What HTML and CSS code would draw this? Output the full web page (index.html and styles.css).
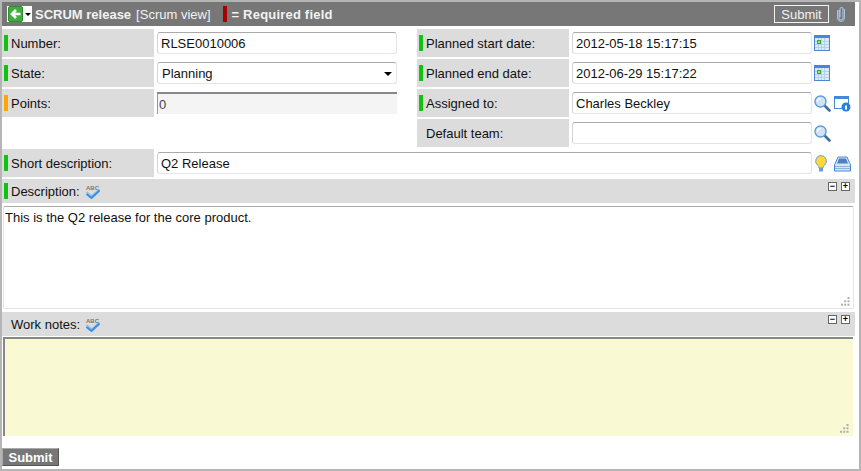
FILE: index.html
```html
<html>

<head>
  <meta http-equiv="Content-Type" content="text/html; charset=utf-8" />
  <title>SCRUM release</title>
  <link rel="stylesheet" href="styles.css">
</head>

<body>
  <svg class="defs" width="0" height="0">
    <symbol id="cal" viewBox="0 0 16 16">
      <rect x="0.5" y="0.5" width="15" height="15" fill="#dcebfa" stroke="#4a86d8" />
      <rect x="1" y="1" width="14" height="2" fill="#4a86d8" />
      <path d="M1 6.500h14M1 9.500h14M1 12.500h14M4.500 3v12M7.500 3v12M10.500 3v12" stroke="#b4d0ee" fill="none" />
      <rect x="3" y="5" width="4" height="4" fill="#2fae2f" />
      <rect x="4.200" y="6.200" width="1.600" height="1.600" fill="#e8f5e0" />
    </symbol>
    <symbol id="search" viewBox="0 0 17 17">
      <path d="M10.500 10.500l5 5" stroke="#3f6f9f" stroke-width="2.600" stroke-linecap="round" />
      <circle cx="6.500" cy="6.500" r="5.500" fill="#cfe4f8" stroke="#5f9bd6" stroke-width="1.400" />
      <path d="M3.500 6.500a3 3 0 0 1 3-3" stroke="#fff" stroke-width="1.200" fill="none" />
    </symbol>
    <symbol id="grip" viewBox="0 0 9 9">
      <path d="M6.500 0h2v2h-2zM3.200 3.300h2v2h-2zM6.500 3.300h2v2h-2zM0 6.700h2v2H0zM3.200 6.700h2v2h-2zM6.500 6.700h2v2h-2z" fill="#b0b0a8" />
    </symbol>
  </svg>

  <div class="page">
    <div class="titlebar">
      <span class="nav">
        <svg class="back" width="15" height="16" viewBox="0 0 15 16">
          <rect x="0.500" y="0.500" width="14" height="15" rx="1.500" fill="#3fae3f" stroke="#2e8f2e" />
          <path d="M12.500 8H4.500M8 4L4 8l4 4" stroke="#fff" stroke-width="2.600" fill="none" />
        </svg>
        <span class="caret"></span>
      </span>
      <b class="title">SCRUM release</b>
      <span class="view">[Scrum view]</span>
      <span class="legend"></span>
      <b class="title req">= Required field</b>
      <span class="spacer"></span>
      <button class="top-submit">Submit</button>
      <svg class="clip" width="10" height="16" viewBox="0 0 10 16">
        <path d="M3 4v8a2 2 0 0 0 4 0V3a1.500 1.500 0 0 0-3 0v8" stroke="#a9c0da" stroke-width="1.200" fill="none" />
        <path d="M1.500 4v8a3.500 3.500 0 0 0 7 0V3" stroke="#a9c0da" fill="none" />
      </svg>
    </div>

    <div class="fields">
      <div class="col">
        <div class="row">
          <label class="lab"><i class="mark ok"></i><span>Number:</span></label>
          <input class="box" value="RLSE0010006">
        </div>
        <div class="row">
          <label class="lab"><i class="mark ok"></i><span>State:</span></label>
          <div class="box sel">Planning</div>
        </div>
        <div class="row">
          <label class="lab"><i class="mark warn"></i><span>Points:</span></label>
          <input class="box ro" value="0" readonly>
        </div>
      </div>
      <div class="col">
        <div class="row">
          <label class="lab"><i class="mark ok"></i><span>Planned start date:</span></label>
          <input class="box" value="2012-05-18 15:17:15">
          <svg class="ico cal"><use href="#cal" /></svg>
        </div>
        <div class="row">
          <label class="lab"><i class="mark ok"></i><span>Planned end date:</span></label>
          <input class="box" value="2012-06-29 15:17:22">
          <svg class="ico cal"><use href="#cal" /></svg>
        </div>
        <div class="row">
          <label class="lab"><i class="mark ok"></i><span>Assigned to:</span></label>
          <input class="box" value="Charles Beckley">
          <svg class="ico"><use href="#search" /></svg>
          <svg class="ico info" viewBox="0 0 17 17">
            <rect x="0.500" y="1.500" width="14" height="12" fill="#fff" stroke="#4a86d8" />
            <rect x="1" y="2" width="13" height="2" fill="#4a86d8" />
            <circle cx="12" cy="12" r="4.500" fill="#2a7fd8" />
            <rect x="11" y="10.500" width="2" height="4" fill="#fff" />
          </svg>
        </div>
        <div class="row">
          <label class="lab"><i class="mark"></i><span>Default team:</span></label>
          <input class="box" value="">
          <svg class="ico"><use href="#search" /></svg>
        </div>
      </div>
    </div>

    <div class="row wide">
      <label class="lab"><i class="mark ok"></i><span>Short description:</span></label>
      <input class="box" value="Q2 Release">
      <svg class="ico bulb" viewBox="0 0 12 17">
        <path d="M6 .5a5.500 5.500 0 0 0-3.300 9.800c.8.700 1.300 1.500 1.300 2.700h4c0-1.200.5-2 1.300-2.700A5.500 5.500 0 0 0 6 .5z" fill="#ffd83a" stroke="#6b9fd8" />
        <rect x="4" y="13" width="4" height="3.500" fill="#6b9fd8" />
      </svg>
      <svg class="ico tray" viewBox="0 0 17 17">
        <path d="M4 2h9l3.500 8v6H.5v-6z" fill="#d6e6f6" stroke="#4a86d8" />
        <path d="M5 3.500h7l2 5H3z" fill="#4a7fc0" />
        <path d="M1 11.500h15M1 13.500h15" stroke="#8fb4dc" />
      </svg>
    </div>

    <div class="bar">
      <i class="mark ok"></i><span>Description:</span>
      <svg class="ico spell" viewBox="0 0 17 15">
        <text x="1" y="5.500" font-family="Liberation Sans" font-size="6" font-weight="bold" fill="#777">ABC</text>
        <path d="M1.500 8l5 4.500 8-7" stroke="#8fc0f0" stroke-width="2" fill="none" />
        <path d="M1.500 10l5 4 8-7.500" stroke="#3d8ee0" stroke-width="2" fill="none" />
      </svg>
      <span class="spacer"></span>
      <span class="tog">&minus;</span>
      <span class="tog">+</span>
    </div>
    <div class="area">
      <textarea class="txt">This is the Q2 release for the core product.</textarea>
      <svg class="grip"><use href="#grip" /></svg>
    </div>

    <div class="bar notes">
      <i class="mark"></i><span>Work notes:</span>
      <svg class="ico spell" viewBox="0 0 17 15">
        <text x="1" y="5.500" font-family="Liberation Sans" font-size="6" font-weight="bold" fill="#777">ABC</text>
        <path d="M1.500 8l5 4.500 8-7" stroke="#8fc0f0" stroke-width="2" fill="none" />
        <path d="M1.500 10l5 4 8-7.500" stroke="#3d8ee0" stroke-width="2" fill="none" />
      </svg>
      <span class="spacer"></span>
      <span class="tog">&minus;</span>
      <span class="tog">+</span>
    </div>
    <div class="area yellow">
      <textarea class="txt"></textarea>
      <svg class="grip"><use href="#grip" /></svg>
    </div>

    <button class="bottom-submit">Submit</button>
  </div>
</body>

</html>
```

FILE: styles.css
```css
html,
body {
  margin: 0;
  padding: 0;
  background: #fff;
}

body {
  width: 861px;
  height: 471px;
  overflow: hidden;
  font-family: "Liberation Sans", Arial, sans-serif;
  font-size: 13px;
  color: #111;
}

.defs {
  display: block;
  height: 0;
}

.page {
  box-sizing: border-box;
  width: 861px;
  height: 471px;
  border: 2px solid #b5b5b5;
  padding-right: 4px;
  display: flex;
  flex-direction: column;
}

.titlebar {
  height: 24px;
  flex: none;
  background: #777;
  color: #f2f2f2;
  display: flex;
  align-items: center;
  padding-left: 5px;
  margin-bottom: 3px;
}

.nav {
  display: flex;
  align-items: center;
  width: 25px;
  height: 16px;
  background: #fff;
  margin-right: 3px;
}

.back {
  display: block;
  margin-left: 1px;
}

.caret {
  width: 0;
  height: 0;
  margin-left: 2px;
  border: 3px solid transparent;
  border-top: 3px solid #000;
  border-bottom: 0;
}

.title {
  font-size: 13px;
}

.req {
  letter-spacing: .2px;
}

.view {
  margin-left: 5px;
}

.legend {
  width: 4px;
  height: 16px;
  background: #a80000;
  margin: 0 5px 0 12px;
}

.spacer {
  flex: 1;
}

.top-submit {
  box-sizing: border-box;
  width: 55px;
  height: 18px;
  padding: 0;
  margin-right: 7px;
  background: #777;
  border: 1px solid #f2f2f2;
  color: #f2f2f2;
  font: 13px "Liberation Sans", Arial, sans-serif;
}

.clip {
  margin-right: 9px;
}

.fields {
  display: flex;
  flex: none;
  gap: 20px;
}

.col {
  display: flex;
  flex-direction: column;
  gap: 2px;
}

.col:first-child {
  width: 395px;
}

.col:last-child {
  flex: 1;
}

.row {
  display: flex;
  align-items: center;
  height: 28px;
}

.lab {
  box-sizing: border-box;
  align-self: stretch;
  width: 152px;
  flex: none;
  background: #dcdcdc;
  display: flex;
  align-items: center;
  padding-left: 2px;
  margin-right: 3px;
}

.mark {
  flex: none;
  width: 4px;
  height: 16px;
  margin-right: 3px;
}

.ok {
  background: #0fc30f;
}

.warn {
  background: #ffa500;
}

.box {
  box-sizing: border-box;
  width: 240px;
  height: 22px;
  flex: none;
  margin: 0;
  padding: 0 3px;
  background: #fff;
  border: 1px solid #e4e4ee;
  border-top-color: #aaa;
  border-left-color: #d5d5d5;
  border-radius: 3px;
  font: 13px "Liberation Sans", Arial, sans-serif;
  color: #111;
}

.sel {
  position: relative;
  display: flex;
  align-items: center;
  padding-left: 4px;
}

.sel::after {
  content: "";
  position: absolute;
  right: 4px;
  top: 9px;
  border: 4px solid transparent;
  border-top: 4px solid #000;
  border-bottom: 0;
}

.ro {
  background: #f4f4f4;
  border: 0;
  border-top: 2px solid #888;
  border-left: 1px solid #999;
  border-radius: 0;
  padding-left: 1px;
  color: #444;
}

.ico {
  flex: none;
  width: 17px;
  height: 17px;
  margin-left: 2px;
}

.cal {
  width: 16px;
  height: 16px;
}

.info {
  margin-left: 3px;
}

.bulb {
  width: 12px;
  margin-left: 3px;
}

.tray {
  margin-left: 7px;
}

.wide {
  margin-top: 2px;
  flex: none;
}

.wide .box {
  width: 655px;
}

.bar {
  flex: none;
  display: flex;
  align-items: center;
  height: 24px;
  margin-top: 2px;
  padding: 0 5px 0 2px;
  background: #dcdcdc;
}

.bar .mark {
  margin-right: 3px;
}

.notes {
  margin-top: 3px;
}

.spell {
  width: 17px;
  height: 15px;
  margin-left: 5px;
}

.tog {
  box-sizing: border-box;
  align-self: flex-start;
  width: 9px;
  height: 9px;
  margin: 3px 0 0 4px;
  border: 1px solid #666;
  background: #fff;
  color: #000;
  font-size: 9px;
  font-weight: bold;
  line-height: 6px;
  text-align: center;
  overflow: hidden;
}

.area {
  position: relative;
  flex: none;
  box-sizing: border-box;
  height: 103px;
  margin: 3px 1px 0 1px;
}

.txt {
  display: block;
  box-sizing: border-box;
  width: 100%;
  height: 100%;
  margin: 0;
  padding: 3px 1px;
  resize: none;
  background: #fff;
  border: 1px solid #e4e4ee;
  border-top: 1px solid #aaa;
  border-radius: 2px;
  outline: 0;
  font: 13px "Liberation Sans", Arial, sans-serif;
  color: #111;
}

.grip {
  position: absolute;
  right: 4px;
  bottom: 3px;
  width: 9px;
  height: 9px;
}

.yellow {
  height: 99px;
  margin: 1px 2px 0 1px;
}

.yellow .txt {
  background: #f9f9d4;
  border: 0;
  border-top: 2px solid #888;
  border-left: 2px solid #888;
  border-radius: 0;
}

.bottom-submit {
  box-sizing: border-box;
  width: 57px;
  height: 18px;
  margin-top: 12px;
  padding: 0;
  flex: none;
  align-self: flex-start;
  background: #777;
  border: 1px solid #555;
  border-top-color: #aaa;
  border-left-color: #aaa;
  color: #fff;
  font: bold 13px "Liberation Sans", Arial, sans-serif;
}
```
